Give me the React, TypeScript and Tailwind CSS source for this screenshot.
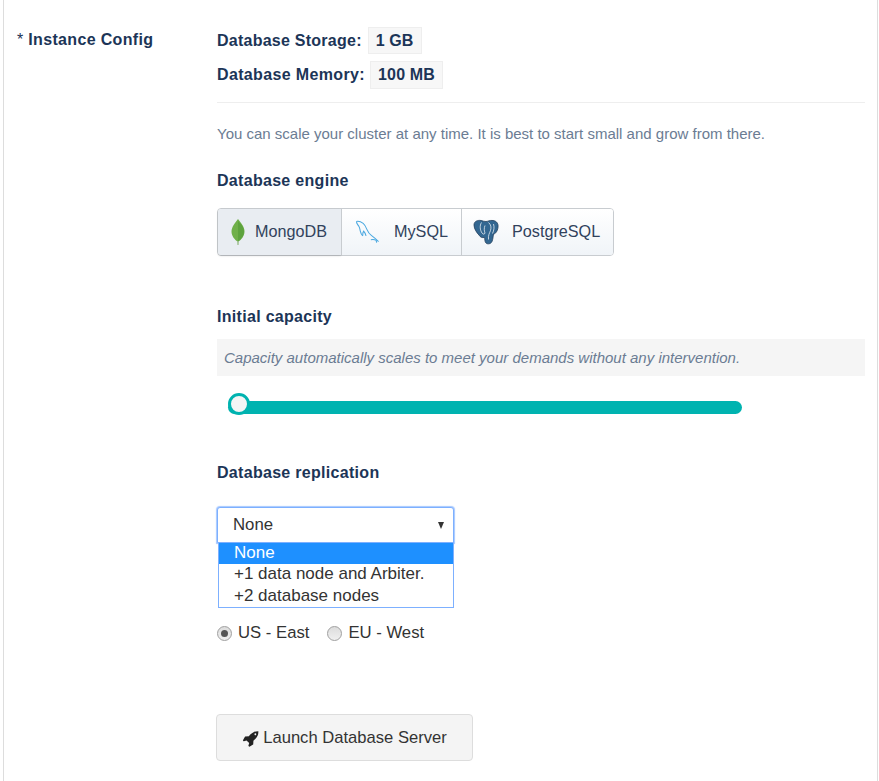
function Rocket() {
  return (
    <svg width="17" height="17" viewBox="0 0 1792 1792" fill="#222222">
      <path fillRule="evenodd" d="M1504 448q0-40-28-68t-68-28-68 28-28 68 28 68 68 28 68-28 28-68zm224-288q0 249-75.5 430.5t-253.5 360.5q-81 80-195 176l-20 379q-2 16-16 26l-384 224q-7 4-16 4-12 0-23-9l-64-64q-13-14-8-32l85-276-281-281-276 85q-3 1-9 1-14 0-23-9l-64-64q-17-19-5-39l224-384q10-14 26-16l379-20q96-114 176-195 188-187 358-258t431-71q14 0 24 9.5t10 22.5z" />
    </svg>
  );
}

function Leaf() {
  return (
    <svg width="14" height="28" viewBox="0 0 14 28">
      <path d="M7 1 C10 5 13.5 9 13.5 13.5 C13.5 18 10 22 7.6 23.5 L7.4 27 L6.6 27 L6.4 23.5 C4 22 0.5 18 0.5 13.5 C0.5 9 4 5 7 1 Z" fill="#70b04a" />
      <path d="M7 3 L7 23.5 C10 21 13 18 13 13.5 C13 9 10 6 7 3 Z" fill="#5ea33e" />
      <path d="M6.6 23 h.8 v4 h-.8 Z" fill="#b8c4b8" />
    </svg>
  );
}

function Dolphin() {
  return (
    <svg width="25" height="26" viewBox="0 0 26 26" fill="none" stroke="#4aa8e0" strokeWidth="1.1">
      <path d="M1.5 2 C4 1.5 6.5 2.5 8.5 4 C10.5 5.5 11.5 8 12.5 10.5 C13.5 13 15 15 17 16.5 C19 18 21 19.5 24.5 23" />
      <path d="M1.5 2 C1.5 4 3 5.5 4 7 C5 8.5 5 10 5.5 12 C6 14 7 16 8 17" />
      <path d="M8 17 C8 15 8 13 9 12 C10.5 13.5 11 15 11.5 17" />
      <path d="M16.5 21 C18.5 20.5 20 20.5 22 21.5 L22.5 24" />
    </svg>
  );
}

function Elephant() {
  return (
    <svg width="26" height="26" viewBox="0 0 26 26">
      <path d="M1 6 C1 2 5 1 8 1.5 C10 2 11 2.5 13 2.5 C15 2.5 16.5 1 20 1.5 C24 2 25.5 5 25 8.5 C24.5 12 22.5 15 20.5 15 C20 18 20 20 19 22.5 C18 25 14.5 25.5 13 24 C11.5 22.5 12 20 11.5 18.5 C9 19 7 18 6 16 C4 14 1 10 1 6 Z" fill="#336791" stroke="#233f5c" strokeWidth="0.8" />
      <path d="M8.5 3.5 C6.5 6.5 7 11 9 14 C10 15.5 11.5 15.5 12 14 M12 6.5 C11 9 11 11.500 12 14 M15.5 3.5 C18 5.5 18.5 8.5 17.5 11.5 C16.5 14.5 15 16 15.5 20.5 M20.5 5 C21.5 8 21 11.5 19.5 14.5" fill="none" stroke="#ffffff" strokeWidth="0.7" />
    </svg>
  );
}

function Radio({ label, checked }: { label: string; checked?: boolean }) {
  return (
    <label className="flex items-center text-[16.7px] leading-[20px] text-[#333333]">
      <span className="flex h-[15px] w-[15px] items-center justify-center rounded-full border border-[#a0a0a0] bg-gradient-to-b from-[#dcdcdc] to-[#f0f0f0]">
        {checked && <span className="h-[7px] w-[7px] rounded-full bg-[#555555]" />}
      </span>
      <span className="ml-[6px]">{label}</span>
    </label>
  );
}

function EngineButton({ children, label, active, className }: { children: React.ReactNode; label: string; active?: boolean; className: string }) {
  return (
    <div className={`flex h-full items-center border-l border-[#c8ccd0] first:border-l-0 text-[16.2px] text-[#31425c] ${className} ${active ? "bg-[#e9edf2] shadow-[0_1px_2px_rgba(0,0,0,0.15)]" : "bg-gradient-to-b from-white to-[#f0f4f8]"}`}>
      {children}
      <span className="-translate-y-px">{label}</span>
    </div>
  );
}

const heading = "text-[16px] leading-[20px] font-bold tracking-[0.3px] text-[#1c3557]";

export default function App() {
  return (
    <div className="h-[781px] overflow-hidden bg-white font-['Liberation_Sans',Arial,sans-serif]">
      <div className="ml-[3px] flex h-full w-[875px] border-x border-[#dddddd] pl-[13px]">
        <div className="w-[200px] shrink-0 pt-[30px] text-[16px] leading-[20px] tracking-[0.33px] text-[#1c3557]">
          <span className="font-normal">* </span>
          <span className="font-bold">Instance Config</span>
        </div>
        <div className="w-[648px] pt-[27px]">
          <div className="flex h-[27px] items-center">
            <span className="text-[16px] leading-[20px] font-bold tracking-[0.25px] text-[#1c3557]">Database Storage:</span>
            <span className="ml-[6px] flex h-[27px] items-center border border-[#eeeeee] bg-[#f7f7f7] px-[7px] text-[16px] font-bold tracking-[0.1px] text-[#1c3557]">1 GB</span>
          </div>
          <div className="mt-[7px] flex h-[28px] items-center">
            <span className="text-[16px] leading-[20px] font-bold tracking-[0.36px] text-[#1c3557]">Database Memory:</span>
            <span className="ml-[5px] flex h-[28px] items-center border border-[#eeeeee] bg-[#f7f7f7] px-[7px] text-[16px] font-bold tracking-[0.15px] text-[#1c3557]">100 MB</span>
          </div>
          <div className="mt-[13px] h-px bg-[#eeeeee]" />
          <p className="mt-[21px] text-[15px] leading-[20px] text-[#6b7c93]">You can scale your cluster at any time. It is best to start small and grow from there.</p>
          <h3 className={`mt-[27px] ${heading}`}>Database engine</h3>
          <div className="mt-[17px] flex h-[48px] w-[397px] rounded-[4px] border border-[#c8ccd0]">
            <EngineButton label="MongoDB" active className="w-[123px] gap-[10px] pl-[13px] rounded-l-[3px]">
              <Leaf />
            </EngineButton>
            <EngineButton label="MySQL" className="w-[120px] gap-[14px] pl-[13px]">
              <Dolphin />
            </EngineButton>
            <EngineButton label="PostgreSQL" className="flex-1 gap-[13px] pl-[11px] rounded-r-[3px]">
              <Elephant />
            </EngineButton>
          </div>
          <h3 className={`mt-[51px] ${heading}`}>Initial capacity</h3>
          <div className="mt-[12px] flex h-[37px] items-center bg-[#f5f5f5] pl-[7px] pt-[2px] text-[15px] italic text-[#6b7c93]">Capacity automatically scales to meet your demands without any intervention.</div>
          <div className="relative mt-[25px] ml-[11px] h-[13px] w-[514px] rounded-full bg-[#00b3b0]">
            <div className="absolute left-0 top-[-8px] h-[22px] w-[22px] rounded-full border-[3px] border-[#00b3b0] bg-[#f5f5f5]" />
          </div>
          <h3 className={`mt-[49px] ${heading}`}>Database replication</h3>
          <div className="mt-[24px] w-[237px] text-[16.8px] text-[#333333]">
            <div className="flex h-[36px] items-center justify-between rounded-t-[3px] border-[1.5px] border-[#7db0ff] bg-white pl-[15px] pr-[9px] shadow-[0_0_1px_1px_#a6c8ff]">
              <span>None</span>
              <span className="h-0 w-0 border-x-[3.5px] border-t-[7px] border-x-transparent border-t-[#333333]" />
            </div>
            <div className="relative -mt-px ml-px border-[1.5px] border-[#7db0ff] bg-white text-[17px] leading-[21px]">
              <div className="h-[21px] bg-[#1e90ff] pl-[15px] leading-[19px] text-white">None</div>
              <div className="h-[21px] pl-[15px] leading-[19px]">+1 data node and Arbiter.</div>
              <div className="h-[22px] pl-[15px]">+2 database nodes</div>
            </div>
          </div>
          <div className="mt-[15px] flex gap-[18px]">
            <Radio label="US - East" checked />
            <Radio label="EU - West" />
          </div>
          <button className="-ml-px mt-[71px] flex h-[47px] w-[257px] items-center justify-center gap-[4px] rounded-[4px] border border-[#dddddd] bg-[#f4f4f4] pt-[2px] text-[16.6px] text-[#333333]">
            <Rocket />
            <span>Launch Database Server</span>
          </button>
        </div>
      </div>
    </div>
  );
}
